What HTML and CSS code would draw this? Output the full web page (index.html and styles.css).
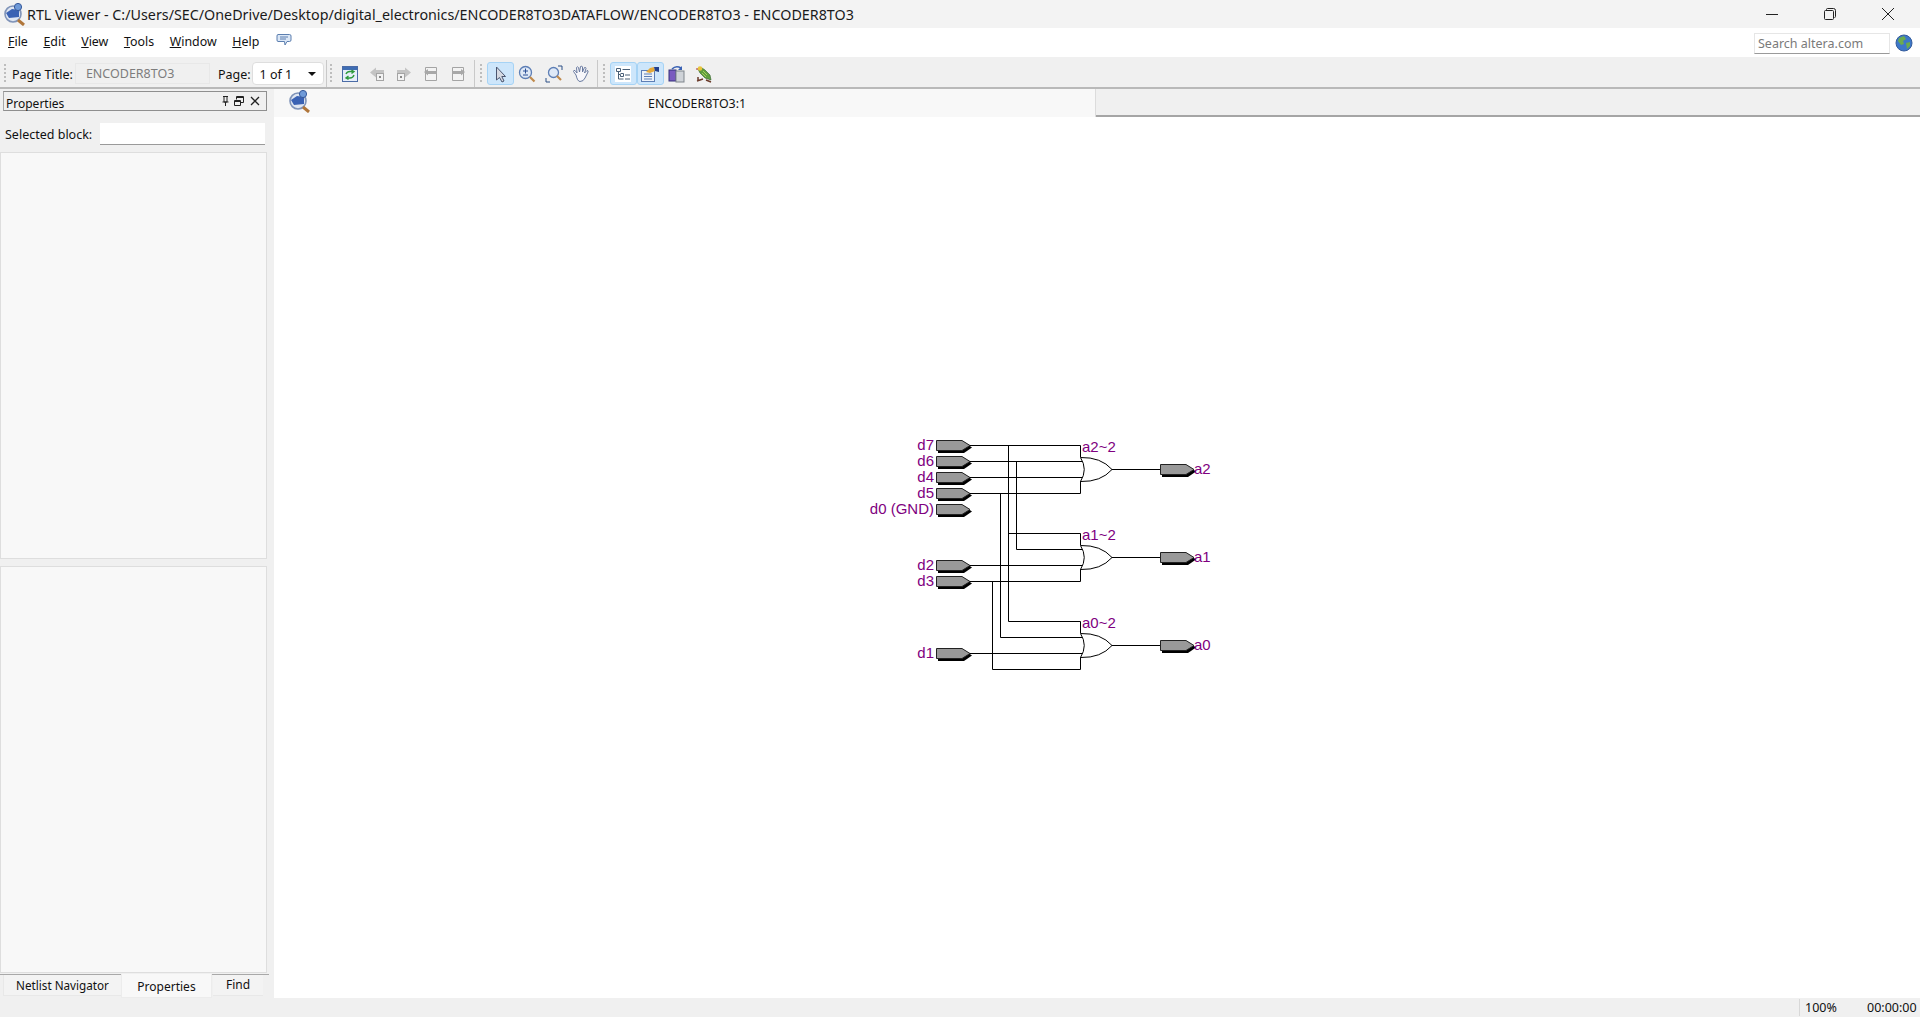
FILE: index.html
```html
<!DOCTYPE html>
<html lang="en">
<head>
<meta charset="utf-8">
<title>RTL Viewer</title>
<link rel="stylesheet" href="styles.css">
</head>
<body>
<svg class="defs" width="0" height="0" aria-hidden="true">
  <defs>
    <symbol id="logo" viewBox="0 0 24 24">
      <circle cx="10" cy="12" r="8" fill="#dfe6f2" stroke="#7f93b8" stroke-width="1.6"/>
      <path d="M3 11 L9 7 L16 8 L16 15 L6 16 Z" fill="#3a62b4"/>
      <circle cx="15" cy="5" r="3.6" fill="#6f9ad8" stroke="#35589a"/>
      <path d="M15 18 L21 23" stroke="#b0763a" stroke-width="3"/>
    </symbol>
    <symbol id="pinout" viewBox="0 0 40 16">
      <path d="M2 2 H28 L36 7.500 L28 13 H2 Z" fill="#000"/>
      <path d="M.5 .5 H26 L34 5.500 L26 10.500 H.5 Z" fill="#999" stroke="#222"/>
    </symbol>
  </defs>
</svg>

<header class="titlebar">
  <svg class="title-logo" width="24" height="24"><use href="#logo"/></svg>
  <span class="title-text">RTL Viewer - C:/Users/SEC/OneDrive/Desktop/digital_electronics/ENCODER8TO3DATAFLOW/ENCODER8TO3 - ENCODER8TO3</span>
  <div class="win-buttons">
    <svg class="win-btn" width="14" height="14" viewBox="0 0 14 14"><path d="M1 7.500H13" stroke="#222" fill="none"/></svg>
    <svg class="win-btn" width="14" height="14" viewBox="0 0 14 14"><path d="M3.500 3V2.500Q3.500 1.500 4.500 1.500H10.500Q12.500 1.500 12.500 3.500V9.500Q12.500 10.500 11.500 10.500M2.500 3.500H9.500Q10.500 3.500 10.500 4.500V11.500Q10.500 12.500 9.500 12.500H2.500Q1.500 12.500 1.500 11.500V4.500Q1.500 3.500 2.500 3.500Z" stroke="#222" fill="none"/></svg>
    <svg class="win-btn" width="14" height="14" viewBox="0 0 14 14"><path d="M1 1L13 13M13 1L1 13" stroke="#222" fill="none"/></svg>
  </div>
</header>

<nav class="menubar">
  <span class="menu-item"><u>F</u>ile</span>
  <span class="menu-item"><u>E</u>dit</span>
  <span class="menu-item"><u>V</u>iew</span>
  <span class="menu-item"><u>T</u>ools</span>
  <span class="menu-item"><u>W</u>indow</span>
  <span class="menu-item"><u>H</u>elp</span>
  <svg class="feedback" width="16" height="14" viewBox="0 0 16 14"><path d="M2 1.500H13.500Q15 1.500 15 3V7Q15 8.500 13.500 8.500H11L9 12L8.500 8.500H2Q1 8.500 1 7V3Q1 1.500 2 1.500Z" fill="#dbe7f6" stroke="#5c7fb0"/><path d="M4 4H12M4 6H10" stroke="#5c7fb0"/></svg>
  <div class="search-wrap">
    <div class="search-box">Search altera.com</div>
    <svg class="globe" width="18" height="18" viewBox="0 0 18 18"><circle cx="9" cy="9" r="8" fill="#3d78c9" stroke="#345c9c"/><path d="M4 4L9 2L11 5L8 7L9 10L6 11L3 7Z" fill="#6cab4f"/><path d="M11 9L15 8L15 12L12 15Z" fill="#6cab4f"/></svg>
  </div>
</nav>

<div class="toolbar">
  <span class="grip"></span>
  <span class="tb-label tb-title-label">Page Title:</span>
  <div class="tb-field">ENCODER8TO3</div>
  <span class="tb-label tb-page-label">Page:</span>
  <div class="tb-combo"><span>1 of 1</span><span class="caret"></span></div>
  <span class="sep sep-first"></span>
  <span class="grip"></span>

  <div class="tool-group">
    <span class="tool"><svg width="16" height="16" viewBox="0 0 16 16"><rect x=".5" y=".5" width="15" height="15" fill="#e6eefa" stroke="#4a6ba6"/><rect x="1" y="1" width="14" height="3" fill="#3f6db4"/><path d="M4 8Q5 5.500 8 5.500H11M9.500 4L12 5.500L9.500 7.500M12 9Q11 12 8 12H5M6.500 10L4 12L6.500 13.500" stroke="#2e9a3c" stroke-width="1.400" fill="none"/></svg></span>
    <span class="tool"><svg width="16" height="16" viewBox="0 0 16 16"><path d="M1 6.500L7 1.500V4H15V8H7V11.500Z" fill="#c4c4c4"/><rect x="7.500" y="7.500" width="7" height="7" fill="#f3f3f3" stroke="#a4a4a4"/><rect x="10" y="10" width="2" height="2" fill="#888"/></svg></span>
    <span class="tool"><svg width="16" height="16" viewBox="0 0 16 16"><path d="M15 6.500L9 1.500V4H1V8H9V11.500Z" fill="#c4c4c4"/><rect x="1.500" y="7.500" width="7" height="7" fill="#f3f3f3" stroke="#a4a4a4"/><rect x="4" y="10" width="2" height="2" fill="#888"/></svg></span>
    <span class="tool"><svg width="16" height="16" viewBox="0 0 16 16"><path d="M2.500 1.500H13.500V14.500H2.500Z" fill="#f3f3f3" stroke="#a4a4a4"/><path d="M1 6L5 3V5H14V8H5V9.500Z" fill="#a8a8a8"/></svg></span>
    <span class="tool"><svg width="16" height="16" viewBox="0 0 16 16"><path d="M2.500 1.500H13.500V14.500H2.500Z" fill="#f3f3f3" stroke="#a4a4a4"/><path d="M15 6L11 3V5H2V8H11V9.500Z" fill="#a8a8a8"/></svg></span>
  </div>
  <span class="sep"></span>
  <span class="grip"></span>

  <div class="tool-group">
    <span class="tool tool-on"><svg width="16" height="18" viewBox="0 0 16 18"><path d="M4.500 2V15L7.500 12.500L10 17L12 16L9.800 11.500H13.500Z" fill="#d5d9e2" stroke="#4a5570"/></svg></span>
    <span class="tool"><svg width="18" height="18" viewBox="0 0 18 18"><circle cx="7.500" cy="7.500" r="6" fill="#dfe9f7" stroke="#5d7eb5" stroke-width="1.300"/><path d="M5 6H10M7.500 3.500V8.500M5 10H10" stroke="#2a4f96"/><path d="M12 12L16.500 16.500" stroke="#c08a4c" stroke-width="2.200"/></svg></span>
    <span class="tool"><svg width="18" height="18" viewBox="0 0 18 18"><path d="M1 13V17H5M13 1H17V5" stroke="#2a4f86" fill="none"/><circle cx="8.500" cy="7.500" r="5" fill="#dfe9f7" stroke="#5d7eb5" stroke-width="1.300"/><path d="M12 11L16 15" stroke="#c08a4c" stroke-width="2.200"/></svg></span>
    <span class="tool"><svg width="18" height="18" viewBox="0 0 18 18"><path d="M4 10L1.500 6.500Q1.500 5 3 5.500L5 8L4.500 2.500Q5 1 6.500 2.500L7.500 7L8.500 1.500Q10 .5 10.500 2L10.500 7L12.500 2.500Q14 2 14 3.500L12.500 8L15 5.500Q16.500 5.500 16 7L13 13Q11.500 16.500 8 16.500Q5.500 16.500 4 10Z" fill="#f7f7fb" stroke="#6a7ba0"/></svg></span>
  </div>
  <span class="sep"></span>
  <span class="grip"></span>

  <div class="tool-group">
    <span class="tool tool-on"><svg width="16" height="16" viewBox="0 0 16 16"><rect width="16" height="16" fill="#fff"/><path d="M1.500 2.500H5.500V5.500H1.500ZM3.500 5.500V13M3.500 8.500H5.500V10.500H8.500V7.500H5.500M3.500 13H8.500" stroke="#4a6078" fill="none"/><path d="M7.500 3.500H15M10 9H15M10 13H15" stroke="#4a6078"/></svg></span>
    <span class="tool tool-on"><svg width="18" height="16" viewBox="0 0 18 16"><rect x=".5" y="4.500" width="13" height="11" fill="#eef3fa" stroke="#5d7eb5"/><path d="M3 8H11M3 10.500H11M3 13H11" stroke="#5d7eb5"/><path d="M5 6L9 2L13 1L14 5L9 7Z" fill="#e5a93a"/><path d="M13 1H18V6L14 5Z" fill="#23408c"/></svg></span>
    <span class="tool"><svg width="18" height="18" viewBox="0 0 18 18"><rect x="1" y="5" width="7" height="11" fill="#7a5bc0" stroke="#33307a"/><rect x="8" y="6" width="8" height="11" fill="#cfd3d8" stroke="#7f858c"/><path d="M4 4Q8 0 13 3" stroke="#3a62b4" stroke-width="1.600" fill="none"/><path d="M14 1V5H10Z" fill="#3a62b4"/></svg></span>
    <span class="tool"><svg width="18" height="18" viewBox="0 0 18 18"><path d="M3 4L7 3L10 5L15 10L16 15L10 13L5 8Z" fill="#5f9e3e" stroke="#2f5f28" stroke-width=".6"/><path d="M8 6L12 10M7 8L11 12" stroke="#a7cf5a"/><circle cx="5" cy="3.500" r="2.300" fill="#e8c43a"/><path d="M1 4L3 4" stroke="#a33"/><path d="M2 16L8 14M11 15L16 17M3 12V16" stroke="#6b3a2a" stroke-width="1.500"/></svg></span>
  </div>
</div>

<main class="workspace">
  <aside class="sidebar">
    <div class="dock-header">
      <span class="dock-title">Properties</span>
      <svg width="46" height="12" viewBox="0 0 46 12"><path d="M3 1.500H8M4 1.500V7H7V1.500M2.500 7H8.500M5.500 7V11" stroke="#222" fill="none"/><path d="M16.500 4.500V1.500H23.500V7.500H20.500M14.500 5.500H20.500V10.500H14.500Z" stroke="#222" fill="none"/><path d="M16.500 2.500H23.500M14.500 6.500H20.500" stroke="#222"/><path d="M31 2L39 10M39 2L31 10" stroke="#222" stroke-width="1.300"/></svg>
    </div>
    <div class="selected-row">
      <span>Selected block:</span>
      <div class="selected-input"></div>
    </div>
    <div class="pane"></div>
    <div class="pane"></div>
    <div class="dock-tabs">
      <span class="dock-tab tab-netlist">Netlist Navigator</span>
      <span class="dock-tab dock-tab-active">Properties</span>
      <span class="dock-tab tab-find">Find</span>
    </div>
  </aside>

  <section class="viewer">
    <div class="tabstrip">
      <div class="page-tab">
        <svg class="page-tab-logo" width="24" height="24"><use href="#logo"/></svg>
        <span class="page-tab-name">ENCODER8TO3:1</span>
      </div>
      <div class="tab-rest"></div>
    </div>
    <div class="canvas">
      <svg class="schematic" viewBox="274 117 1646 881" preserveAspectRatio="xMinYMin meet">
        <g class="wires">
          <path d="M968 445.500H1080.500V457"/>
          <path d="M968 461.500H1084"/>
          <path d="M968 477.500H1084"/>
          <path d="M968 493.500H1080.500V481"/>
          <path d="M1008.500 445.500V621.500H1080.500V633"/>
          <path d="M1016.500 461.500V549.500H1084"/>
          <path d="M1000.500 493.500V637.500H1084"/>
          <path d="M1008.500 533.500H1080.500V545"/>
          <path d="M968 565.500H1084"/>
          <path d="M968 581.500H1080.500V569"/>
          <path d="M992.500 581.500V669.500H1080.500V657"/>
          <path d="M968 653.500H1084"/>
          <path d="M1112 469.500H1160"/>
          <path d="M1112 557.500H1160"/>
          <path d="M1112 645.500H1160"/>
        </g>
        <g class="gates">
          <path d="M1080.500 457.500Q1088 469.500 1080.500 481.500Q1101 482 1112 469.500Q1101 457 1080.500 457.500Z"/>
          <path d="M1080.500 545.500Q1088 557.500 1080.500 569.500Q1101 570 1112 557.500Q1101 545 1080.500 545.500Z"/>
          <path d="M1080.500 633.500Q1088 645.500 1080.500 657.500Q1101 658 1112 645.500Q1101 633 1080.500 633.500Z"/>
        </g>
        <use href="#pinout" x="936" y="440" width="40" height="16"/>
        <use href="#pinout" x="936" y="456" width="40" height="16"/>
        <use href="#pinout" x="936" y="472" width="40" height="16"/>
        <use href="#pinout" x="936" y="488" width="40" height="16"/>
        <use href="#pinout" x="936" y="504" width="40" height="16"/>
        <use href="#pinout" x="936" y="560" width="40" height="16"/>
        <use href="#pinout" x="936" y="576" width="40" height="16"/>
        <use href="#pinout" x="936" y="648" width="40" height="16"/>
        <use href="#pinout" x="1160" y="464" width="40" height="16"/>
        <use href="#pinout" x="1160" y="552" width="40" height="16"/>
        <use href="#pinout" x="1160" y="640" width="40" height="16"/>
        <g class="labels">
          <text x="934" y="450" text-anchor="end">d7</text>
          <text x="934" y="466" text-anchor="end">d6</text>
          <text x="934" y="482" text-anchor="end">d4</text>
          <text x="934" y="498" text-anchor="end">d5</text>
          <text x="934" y="514" text-anchor="end">d0 (GND)</text>
          <text x="934" y="570" text-anchor="end">d2</text>
          <text x="934" y="586" text-anchor="end">d3</text>
          <text x="934" y="658" text-anchor="end">d1</text>
          <text x="1082" y="452">a2~2</text>
          <text x="1082" y="540">a1~2</text>
          <text x="1082" y="628">a0~2</text>
          <text x="1194" y="474">a2</text>
          <text x="1194" y="562">a1</text>
          <text x="1194" y="650">a0</text>
        </g>
      </svg>
    </div>
    <footer class="statusbar">
      <span class="status-zoom">100%</span>
      <span class="status-time">00:00:00</span>
    </footer>
  </section>
</main>
</body>
</html>
```
FILE: styles.css
```css
* { box-sizing: border-box; }
html, body { margin: 0; height: 100%; }
body {
  width: 1920px;
  height: 1017px;
  overflow: hidden;
  display: flex;
  flex-direction: column;
  background: #f0f0f0;
  color: #111;
  font-family: "Noto Sans", "Liberation Sans", sans-serif;
  font-size: 12px;
}
.defs { position: absolute; }

.titlebar {
  height: 28px;
  flex: none;
  display: flex;
  align-items: center;
  background: #f3f3f3;
  padding-left: 3px;
}
.title-logo { flex: none; }
.title-text { font-size: 14.3px; white-space: nowrap; color: #1a1a1a; }
.win-buttons { margin-left: auto; display: flex; align-items: center; gap: 44px; padding-right: 25px; }
.win-btn { display: block; }

.menubar {
  height: 30px;
  flex: none;
  display: flex;
  align-items: center;
  background: #fff;
  padding-left: 8px;
  border-bottom: 1px solid #f0f0f0;
}
.menu-item { margin-right: 15.6px; font-size: 12.4px; line-height: 20px; margin-top: -2px; }
.feedback { margin-left: 1px; margin-top: -6px; }
.search-wrap { margin-left: auto; display: flex; align-items: center; height: 100%; padding-right: 7px; padding-top: 1px; }
.search-box {
  width: 136px;
  height: 21px;
  background: #fff;
  border: 1px solid #e6e6e6;
  border-bottom: 1px solid #9a9a9a;
  color: #7a7a7a;
  font-size: 12.5px;
  line-height: 19px;
  padding-left: 3px;
  margin-right: 5px;
}

.toolbar {
  height: 31px;
  flex: none;
  display: flex;
  align-items: center;
  background: #f0f0f0;
  border-bottom: 2px solid #b9b9b9;
  padding-left: 4px;
  padding-top: 2px;
}
.grip {
  width: 2px;
  height: 20px;
  flex: none;
  background: repeating-linear-gradient(to bottom, #bdbdbd 0 2px, transparent 2px 4px);
}
.sep { width: 1px; height: 27px; flex: none; background: #c9c9c9; margin-left: 2px; margin-right: 5px; }
.sep-first { margin-left: 2px; margin-right: 3px; }
.tb-label { font-size: 12.5px; padding-top: 1px; }
.tb-title-label { margin-left: 6px; }
.tb-field {
  width: 135px;
  height: 21px;
  margin-left: 2px;
  border: 1px solid #e8e8e8;
  color: #7d7d7d;
  font-size: 12.5px;
  line-height: 20px;
  padding-left: 10px;
}
.tb-page-label { margin-left: 8px; }
.tb-combo {
  width: 72px;
  height: 23px;
  margin-left: 1px;
  background: #fff;
  border: 1px solid #dedede;
  border-radius: 4px;
  font-size: 12.5px;
  display: flex;
  align-items: center;
  justify-content: space-between;
  padding: 1px 7px 0 7px;
}
.caret { width: 0; height: 0; border-left: 4px solid transparent; border-right: 4px solid transparent; border-top: 4px solid #111; }

.tool-group { display: flex; align-items: center; margin-left: 5px; }
.tool { width: 27px; height: 23px; display: flex; align-items: center; justify-content: center; flex: none; }
.tool-on { background: #cde6fb; border: 1px solid #a6d3f5; border-radius: 3px; }

.workspace { flex: 1; display: flex; min-height: 0; }

.sidebar { width: 274px; flex: none; display: flex; flex-direction: column; padding-top: 2px; background: #f0f0f0; }
.dock-header {
  margin-left: 3px;
  width: 264px;
  height: 20px;
  flex: none;
  border: 1px solid #8f8f8f;
  border-left-color: #a8a8a8;
  display: flex;
  align-items: center;
  justify-content: space-between;
  padding-left: 2px;
}
.dock-title { font-size: 12px; padding-top: 5px; }
.selected-row { height: 40px; flex: none; display: flex; align-items: center; padding: 6px 0 0 5px; font-size: 12.5px; }
.selected-input { width: 165px; height: 22px; margin-left: auto; margin-right: 9px; background: #fff; border-bottom: 1px solid #9a9a9a; }
.pane { width: 267px; height: 407px; flex: none; background: #f8f8f8; border: 1px solid #dedede; margin-top: 1px; }
.pane + .pane { margin-top: 7px; }
.dock-tabs {
  width: 269px;
  height: 26px;
  flex: none;
  margin-top: 1px;
  display: flex;
  align-items: flex-start;
  border-top: 1px solid #a8a8a8;
  padding-left: 3px;
  font-size: 12px;
}
.dock-tab { height: 21px; text-align: center; line-height: 20px; background: #f3f3f3; border-bottom: 1px solid #e8e8e8; }
.tab-netlist { width: 118px; border-left: 1px solid #e8e8e8; font-size: 11.7px; }
.tab-find { width: 50px; margin-left: 1px; }
.dock-tab-active { width: 91px; height: 24px; margin-top: -1px; line-height: 26px; background: #f8f8f8; border: 1px solid #ececec; border-top: 0; }

.viewer { flex: 1; min-width: 0; display: flex; flex-direction: column; }
.tabstrip { height: 28px; flex: none; display: flex; background: #f0f0f0; }
.page-tab { width: 822px; flex: none; display: flex; align-items: center; background: #f8f8f8; border-right: 1px solid #dcdcdc; position: relative; }
.page-tab-logo { margin-left: 14px; margin-top: -4px; }
.page-tab-name { position: absolute; left: 374px; font-size: 12.4px; }
.tab-rest { flex: 1; border-bottom: 2px solid #a5a5a5; }
.canvas { flex: 1; min-height: 0; background: #fff; }
.schematic { display: block; width: 1646px; height: 881px; }
.wires path { fill: none; stroke: #000; stroke-width: 1; }
.gates path { fill: #fff; stroke: #000; stroke-width: 1; }
.labels text { fill: #800080; font-family: "Liberation Sans", Arial, sans-serif; font-size: 15px; }
.statusbar { height: 19px; flex: none; display: flex; align-items: center; background: #f0f0f0; font-size: 12.5px; }
.status-zoom { margin-left: 1525px; padding-left: 5px; border-left: 1px solid #d8d8d8; width: 68px; }
.status-time { white-space: nowrap; }
```
